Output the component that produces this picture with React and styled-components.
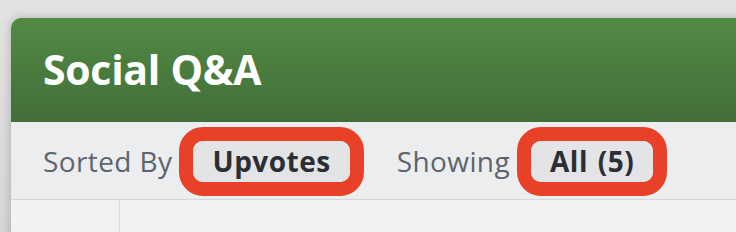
import React from 'react';
import styled, { createGlobalStyle } from 'styled-components';

const Global = createGlobalStyle`
  html, body {
    margin: 0;
    padding: 0;
    height: 100%;
    overflow: hidden;
    background: linear-gradient(#e2e2e2, #d6d6d6);
    font-family: "Open Sans", "Liberation Sans", sans-serif;
  }
`

function Filter({ label, value, first }) {
    return (
        <Group first={first}>
            <Label>{label}</Label>
            <Ring>
                <Pill>{value}</Pill>
            </Ring>
        </Group>
    );
}

function App() {
    return (
        <>
            <Global />
            <Page>
                <Window>
                    <Header>
                        <Title>Social Q&amp;A</Title>
                    </Header>
                    <Toolbar>
                        <Filter label='Sorted By' value='Upvotes' first />
                        <Filter label='Showing' value='All (5)' />
                    </Toolbar>
                    <Body>
                        <Side />
                        <Main />
                    </Body>
                </Window>
            </Page>
        </>
    );
}

export default App

const Page = styled.div`
    height: 232px;
    padding: 18px 0 0 11px;
    box-sizing: border-box;
    overflow: hidden;
`
const Window = styled.div`
    width: 800px;
    height: 260px;
    border-top-left-radius: 10px;
    overflow: hidden;
    box-shadow: 0 0 10px rgba(0, 0, 0, 0.22);
    display: flex;
    flex-direction: column;
`
const Header = styled.div`
    height: 104px;
    flex-shrink: 0;
    background: linear-gradient(#528a44, #426e38);
    display: flex;
    align-items: center;
    padding-left: 32px;
`
const Title = styled.div`
    color: #ffffff;
    font-size: 41px;
    font-weight: 700;
    letter-spacing: -0.3px;
    margin-top: -2px;
`
const Toolbar = styled.div`
    height: 78px;
    flex-shrink: 0;
    box-sizing: border-box;
    background: #ecedef;
    border-bottom: 1px solid #d6d7d9;
    display: flex;
    align-items: center;
    padding-left: 32px;
`
const Group = styled.div`
    display: flex;
    align-items: center;
    margin-left: ${p => (p.first ? '0' : '33px')};
`
const Label = styled.span`
    font-size: 28px;
    letter-spacing: 0.4px;
    color: #5d646d;
    margin-right: 7px;
`
const Ring = styled.div`
    border: 14px solid #e84127;
    border-radius: 24px;
    margin-top: 1px;
`
const Pill = styled.div`
    height: 41px;
    box-sizing: border-box;
    padding: 0 19px;
    background: #e3e4e6;
    border-radius: 10px;
    display: flex;
    align-items: center;
    font-size: 28px;
    font-weight: 700;
    letter-spacing: 0.5px;
    word-spacing: 2px;
    white-space: pre;
    color: #2b2e34;
`
const Body = styled.div`
    flex: 1;
    display: flex;
    background: #f2f2f2;
`
const Side = styled.div`
    width: 108px;
    border-right: 1px solid #d9d9d9;
`
const Main = styled.div`
    flex: 1;
`
